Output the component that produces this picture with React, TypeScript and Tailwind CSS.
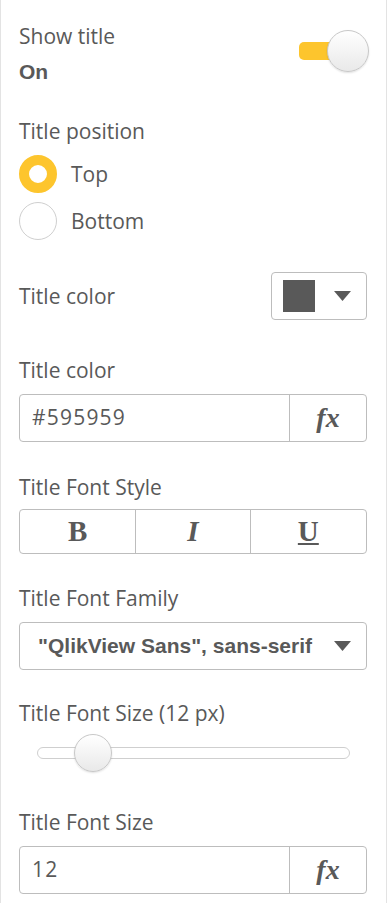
import React from "react";

const LABEL = "text-[21px] leading-6 text-[#595959]";

function Caret() {
  return (
    <svg width="17" height="10" viewBox="0 0 17 10" className="shrink-0">
      <polygon points="0,0 17,0 8.5,10" fill="#595959" />
    </svg>
  );
}

function Knob({ size }: { size: string }) {
  return (
    <div
      className={`${size} rounded-full border border-[#c8c8c8] bg-linear-to-b from-white to-[#e9e9e9] shadow-[0_1px_2px_rgba(0,0,0,0.12)]`}
    />
  );
}

function Toggle() {
  return (
    <div className="relative mt-[6px] h-[42px] w-[70px]">
      <div className="absolute left-0 top-[12px] h-[18px] w-[50px] rounded-[5px] bg-[#fdc52d]" />
      <div className="absolute right-0 top-0">
        <Knob size="h-[42px] w-[42px]" />
      </div>
    </div>
  );
}

function Radio({ label, checked }: { label: string; checked: boolean }) {
  return (
    <div className="flex h-[38px] items-center gap-[14px]">
      {checked ? (
        <div className="h-[38px] w-[38px] rounded-full border-[10px] border-[#fdc52d] bg-white" />
      ) : (
        <div className="h-[38px] w-[38px] rounded-full border border-[#cfcfcf] bg-white" />
      )}
      <span className={LABEL}>{label}</span>
    </div>
  );
}

function FxInput({ value }: { value: string }) {
  return (
    <div className="mt-[12px] flex h-[48px] rounded-[4px] border border-[#bdbdbd]">
      <div className="flex flex-1 items-center pl-[12px] text-[21px] tracking-[1.2px] text-[#595959]">
        {value}
      </div>
      <div className="flex w-[77px] items-center justify-center border-l border-[#bdbdbd]">
        <span className="font-['Liberation_Serif',serif] text-[28px] font-bold italic leading-none text-[#595959]">
          fx
        </span>
      </div>
    </div>
  );
}

export default function App() {
  return (
    <div className="min-h-[903px] w-[387px] border-x border-[#e3e3e3] bg-white pl-[18px] pr-[19px] pt-[24px] font-['Open_Sans',sans-serif]">
      <div className="flex items-start justify-between">
        <div>
          <div className={LABEL}>Show title</div>
          <div className="mt-[12px] font-['Liberation_Sans',sans-serif] text-[21px] font-bold leading-6 text-[#595959]">
            On
          </div>
        </div>
        <div className="-mr-[2px]">
          <Toggle />
        </div>
      </div>

      <div className={`mt-[35px] ${LABEL}`}>Title position</div>
      <div className="mt-[12px] flex flex-col gap-[9px]">
        <Radio label="Top" checked />
        <Radio label="Bottom" checked={false} />
      </div>

      <div className="mt-[32px] flex h-[48px] items-center justify-between">
        <span className={LABEL}>Title color</span>
        <div className="flex h-[48px] w-[96px] items-center justify-between rounded-[4px] border border-[#bdbdbd] pl-[11px] pr-[15px]">
          <div className="h-[32px] w-[32px] bg-[#595959]" />
          <Caret />
        </div>
      </div>

      <div className={`mt-[38px] ${LABEL}`}>Title color</div>
      <FxInput value="#595959" />

      <div className={`mt-[33px] ${LABEL}`}>Title Font Style</div>
      <div className="mt-[10px] grid h-[45px] grid-cols-3 rounded-[4px] border border-[#bdbdbd] font-['Liberation_Serif',serif] text-[29px] font-bold text-[#595959]">
        <div className="flex items-center justify-center">B</div>
        <div className="flex items-center justify-center border-x border-[#bdbdbd] italic">I</div>
        <div className="flex items-center justify-center">
          <span className="underline decoration-2 underline-offset-2">U</span>
        </div>
      </div>

      <div className={`mt-[32px] ${LABEL}`}>Title Font Family</div>
      <div className="mt-[12px] flex h-[48px] items-center justify-between rounded-[4px] border border-[#bdbdbd] pl-[18px] pr-[15px]">
        <span className="font-['Liberation_Sans',sans-serif] text-[21px] font-bold text-[#595959]">
          "QlikView Sans", sans-serif
        </span>
        <Caret />
      </div>

      <div className={`mt-[31px] ${LABEL}`}>Title Font Size (12 px)</div>
      <div className="relative mt-[9px] h-[38px] px-[18px]">
        <div className="absolute left-[18px] right-[17px] top-[13px] h-[12px] rounded-full border border-[#cfcfcf] bg-white" />
        <div className="absolute left-[55px] top-0">
          <Knob size="h-[38px] w-[38px]" />
        </div>
      </div>

      <div className={`mt-[38px] ${LABEL}`}>Title Font Size</div>
      <FxInput value="12" />
    </div>
  );
}
